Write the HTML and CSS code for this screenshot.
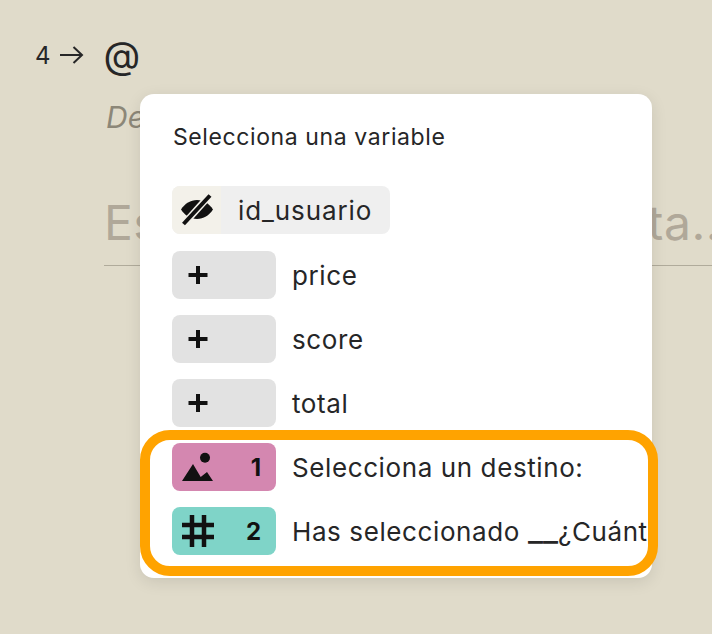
FILE: index.html
```html
<!DOCTYPE html>
<html lang="es">
<head>
    <meta charset="UTF-8">
    <title>Selecciona una variable</title>
    <link rel="stylesheet" href="styles.css">
</head>
<body>
    <main class="question">
        <div class="question-head">
            <span class="question-number">4</span>
            <svg class="arrow" width="26" height="20" viewBox="0 0 26 20"><path d="M1 10h22M14.500 2l8.500 8-8.500 8"/></svg>
            <span class="question-title">@</span>
        </div>
        <p class="question-desc">Describe tu pregunta</p>
        <div class="answer">Escribe aquí tu respuesta...</div>
    </main>

    <div class="menu">
        <h2 class="menu-title">Selecciona una variable</h2>
        <ul class="menu-list">
            <li class="menu-row">
                <span class="chip chip-hidden">
                    <span class="chip-icon">
                        <svg width="34" height="34" viewBox="0 0 34 34"><path class="fill" d="M1 16.500C5 10.500 10.500 7 17 7s12 3.500 16 9.500C29 22.500 23.500 26 17 26S5 22.500 1 16.500z"/><path class="gap" d="M3 32L30 2"/><path class="line" d="M3.500 31L30 2.500"/></svg>
                    </span>
                    <span class="chip-name">id_usuario</span>
                </span>
            </li>
            <li class="menu-row">
                <span class="chip chip-add"><svg width="22" height="22" viewBox="0 0 22 22"><path class="line" d="M11 2v18M1.500 11h19"/></svg></span>
                <span class="row-label">price</span>
            </li>
            <li class="menu-row">
                <span class="chip chip-add"><svg width="22" height="22" viewBox="0 0 22 22"><path class="line" d="M11 2v18M1.500 11h19"/></svg></span>
                <span class="row-label">score</span>
            </li>
            <li class="menu-row">
                <span class="chip chip-add"><svg width="22" height="22" viewBox="0 0 22 22"><path class="line" d="M11 2v18M1.500 11h19"/></svg></span>
                <span class="row-label">total</span>
            </li>
            <li class="menu-row">
                <span class="chip chip-picture">
                    <svg width="32" height="32" viewBox="0 0 32 32"><circle class="fill" cx="23" cy="6.700" r="5"/><path class="fill" d="M0 30L11 13l7.700 13 6.300-5 6 9z"/></svg>
                    <b class="chip-num">1</b>
                </span>
                <span class="row-label">Selecciona un destino:</span>
            </li>
            <li class="menu-row">
                <span class="chip chip-number">
                    <svg width="32" height="32" viewBox="0 0 32 32"><path class="line line-hash" d="M10 0v32M22 0v32M0 10h32M0 22h32"/></svg>
                    <b class="chip-num">2</b>
                </span>
                <span class="row-label">Has seleccionado <span class="blank">__</span>¿Cuántas personas viajan?</span>
            </li>
        </ul>
    </div>

    <div class="highlight"></div>
</body>
</html>
```

FILE: styles.css
```css
* {
    box-sizing: border-box;
}

html, body {
    height: 100%;
}

body {
    margin: 0;
    background-color: #e0dbca;
    font-family: 'Inter', sans-serif;
    color: #262627;
    overflow: hidden;
}

.question {
    padding: 33px 0 0 35px;
}

.question-head {
    display: flex;
    align-items: center;
    height: 44px;
}

.question-number {
    font-size: 24px;
    margin-right: 8px;
}

.arrow {
    fill: none;
    stroke: #262627;
    stroke-width: 2;
}

.question-title {
    font-size: 38px;
    margin-left: 19px;
}

.question-desc {
    margin: 22px 0 0 71px;
    font-size: 30px;
    font-style: italic;
    line-height: 36px;
    color: #8c8778;
}

.answer {
    margin: 59px 0 0 69px;
    padding-bottom: 13px;
    border-bottom: 1px solid #b0ab9b;
    font-size: 48px;
    line-height: 58px;
    letter-spacing: 0.5px;
    white-space: nowrap;
    color: #b0a899;
}

.menu {
    position: absolute;
    left: 140px;
    top: 94px;
    width: 512px;
    height: 484px;
    padding: 29px 0 0 33px;
    background: white;
    border-radius: 14px;
    box-shadow: 0 4px 16px rgba(0, 0, 0, 0.1);
    overflow: hidden;
}

.menu-title {
    margin: 0 0 34px;
    font-size: 23px;
    line-height: 29px;
    font-weight: 420;
    letter-spacing: 0.6px;
}

.menu-list {
    list-style: none;
    margin: 0 0 0 -1px;
    padding: 0;
}

.menu-row {
    display: flex;
    align-items: center;
    height: 48px;
    margin-bottom: 16px;
    white-space: nowrap;
}

.menu-row:first-child {
    margin-bottom: 17px;
}

.chip {
    display: flex;
    align-items: center;
    flex-shrink: 0;
    height: 48px;
    border-radius: 8px;
    overflow: hidden;
}

.fill {
    fill: #111;
}

.line {
    fill: none;
    stroke: #111;
    stroke-width: 4;
}

.line-hash {
    stroke-width: 4.500;
}

.gap {
    fill: none;
    stroke: #f3f1ea;
    stroke-width: 7;
}

.chip-hidden {
    background: #efefef;
}

.chip-icon {
    display: flex;
    align-items: center;
    justify-content: center;
    width: 49px;
    height: 48px;
    background: #f3f1ea;
}

.chip-name {
    padding: 0 18px 0 17px;
    font-size: 26px;
    letter-spacing: 0.9px;
}

.chip-add,
.chip-picture,
.chip-number {
    width: 104px;
    padding: 0 15px 0 10px;
}

.chip-add {
    background: #e2e2e2;
    padding-left: 15px;
}

.chip-picture {
    background: #d487b0;
}

.chip-number {
    background: #7fd4c8;
}

.chip-num {
    margin-left: auto;
    font-size: 24px;
    color: #111;
}

.row-label {
    margin-left: 16px;
    font-size: 26px;
    letter-spacing: 0.6px;
}

.blank {
    font-size: 33px;
    line-height: 0;
    letter-spacing: 0;
}

.highlight {
    position: absolute;
    left: 140px;
    top: 430px;
    width: 518px;
    height: 146px;
    border: 10px solid #ffa300;
    border-radius: 30px;
}
```
